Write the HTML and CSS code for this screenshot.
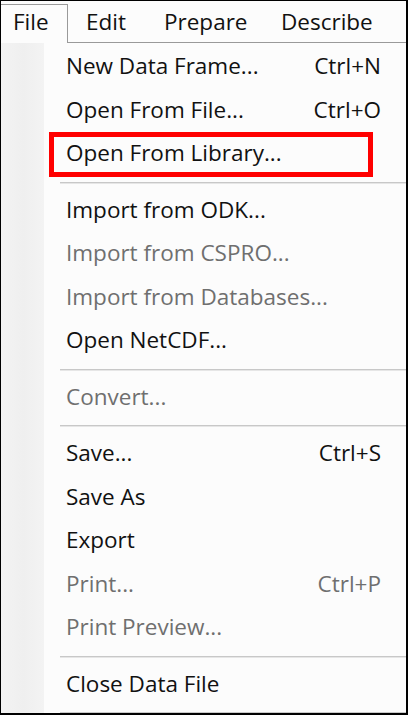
FILE: index.html
```html
<!DOCTYPE html>
<html lang="en">
<head>
<meta charset="utf-8">
<title>File menu</title>
<link rel="stylesheet" href="styles.css">
</head>
<body>
<div class="frame">
  <div class="menubar">
    <div class="bar-item tab-open">File</div>
    <div class="bar-rest">
      <div class="bar-item edit">Edit</div>
      <div class="bar-item prepare">Prepare</div>
      <div class="bar-item describe">Describe</div>
    </div>
  </div>
  <div class="menu">
    <div class="row"><span>New Data Frame...</span><span class="key">Ctrl+N</span></div>
    <div class="row"><span>Open From File...</span><span class="key">Ctrl+O</span></div>
    <div class="row highlighted"><span>Open From Library...</span></div>
    <div class="sep"></div>
    <div class="row"><span>Import from ODK...</span></div>
    <div class="row disabled"><span>Import from CSPRO...</span></div>
    <div class="row disabled"><span>Import from Databases...</span></div>
    <div class="row"><span>Open NetCDF...</span></div>
    <div class="sep"></div>
    <div class="row disabled"><span>Convert...</span></div>
    <div class="sep"></div>
    <div class="row"><span>Save...</span><span class="key">Ctrl+S</span></div>
    <div class="row"><span>Save As</span></div>
    <div class="row"><span>Export</span></div>
    <div class="row disabled"><span>Print...</span><span class="key">Ctrl+P</span></div>
    <div class="row disabled"><span>Print Preview...</span></div>
    <div class="sep"></div>
    <div class="row"><span>Close Data File</span></div>
    <div class="sep"></div>
  </div>
</div>
</body>
</html>
```
FILE: styles.css
```css
html, body {
  margin: 0;
  padding: 0;
  background: #ffffff;
}

.frame {
  width: 408px;
  height: 715px;
  box-sizing: border-box;
  border-style: solid;
  border-color: #000;
  border-width: 1px 2px 2px 1px;
  background: #fcfcfc;
  overflow: hidden;
  font-family: "Open Sans", "Noto Sans", sans-serif;
  font-size: 22.5px;
  color: #111;
}

.menubar {
  display: flex;
  height: 42px;
}

.bar-item {
  line-height: 30px;
  white-space: nowrap;
}

.tab-open {
  margin-top: 3px;
  padding: 2px 0 0 12px;
  box-sizing: border-box;
  width: 67px;
  border-top: 1px solid #9a9a9a;
  border-right: 1px solid #9a9a9a;
}

.bar-rest {
  flex: 1;
  display: flex;
  padding: 6px 0 0 18px;
  border-bottom: 1px solid #9a9a9a;
  box-sizing: border-box;
}

.edit { width: 78px; }
.prepare { width: 117px; }

.menu {
  padding-top: 1px;
  background: linear-gradient(to right, #f3f3f3 0, #efefef 22px, #f3f3f3 43px, #fcfcfc 43px);
}

.row {
  position: relative;
  display: flex;
  justify-content: space-between;
  height: 43.5px;
  line-height: 43.5px;
  padding: 0 25px 0 65px;
  white-space: nowrap;
}

.disabled {
  color: #6f6f6f;
}

.highlighted::after {
  content: "";
  position: absolute;
  left: 48px;
  right: 33px;
  top: 1px;
  bottom: -2.5px;
  border: 5px solid #ff0000;
}

.sep {
  height: 13px;
  position: relative;
}

.sep::before {
  content: "";
  position: absolute;
  left: 59px;
  right: 0;
  top: 7px;
  height: 1px;
  border-top: 1px solid #c8c8c8;
  background: #e6e6e6;
}
```
